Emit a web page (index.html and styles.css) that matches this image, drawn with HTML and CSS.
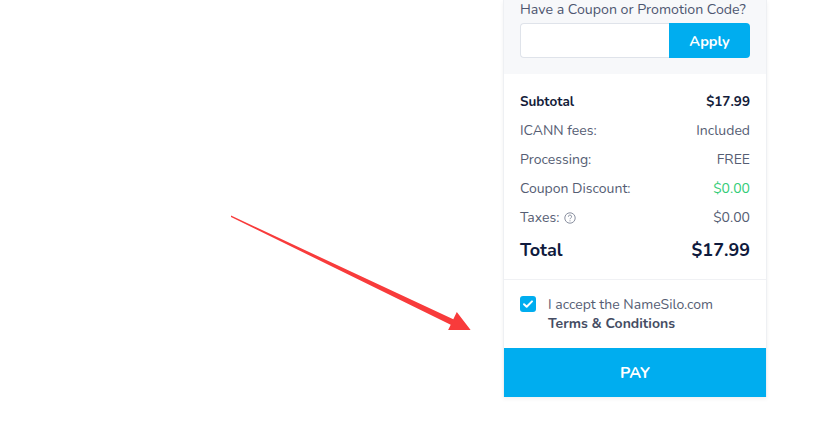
FILE: index.html
```html
<!DOCTYPE html>
<html>
<head>
<meta charset="utf-8">
<link rel="stylesheet" href="styles.css">
</head>
<body>
<div class="page">
  <div class="panel">
    <div class="coupon">
      <div class="coupon-title">Have a Coupon or Promotion Code?</div>
      <div class="coupon-form">
        <input class="coupon-input" type="text">
        <button class="apply-btn">Apply</button>
      </div>
    </div>
    <div class="summary">
      <div class="row strong"><span>Subtotal</span><span>$17.99</span></div>
      <div class="row"><span>ICANN fees:</span><span>Included</span></div>
      <div class="row"><span>Processing:</span><span>FREE</span></div>
      <div class="row"><span>Coupon Discount:</span><span class="green">$0.00</span></div>
      <div class="row"><span class="taxes">Taxes:
        <svg class="help" width="12" height="12" viewBox="0 0 12 12"><circle cx="6" cy="6" r="5.2" fill="none" stroke="#8a90a0" stroke-width="1"/><path d="M4.4 4.7a1.6 1.6 0 1 1 2.3 1.4c-.5.3-.7.5-.7 1.1" fill="none" stroke="#8a90a0" stroke-width="1"/><circle cx="6" cy="8.8" r=".6" fill="#8a90a0"/></svg></span><span>$0.00</span></div>
      <div class="row total"><span>Total</span><span>$17.99</span></div>
    </div>
    <div class="terms">
      <span class="check"><svg width="12" height="10" viewBox="0 0 12 10"><path d="M2 5.2l2.7 2.6L10 2.4" fill="none" stroke="#fff" stroke-width="2" stroke-linecap="round" stroke-linejoin="round"/></svg></span>
      <div class="terms-text">I accept the NameSilo.com<br><b>Terms &amp; Conditions</b></div>
    </div>
    <button class="pay-btn">PAY</button>
  </div>
</div>
<svg class="arrow" width="822" height="422" viewBox="0 0 822 422">
  <defs><clipPath id="c"><rect x="0" y="0" width="822" height="330"/></clipPath></defs>
  <polygon clip-path="url(#c)" fill="#f83b3b" points="231,215.6 231,217 450.7,324.7 447.2,331.9 471.8,331.5 456.8,312.1 453.3,319.3"/>
</svg>
</body>
</html>
```
FILE: styles.css
```css
html, body {
  margin: 0;
  padding: 0;
  background: #fff;
}
body {
  width: 822px;
  height: 422px;
  overflow: hidden;
  position: relative;
  font-family: "Nunito", "Lato", "Open Sans", sans-serif;
}
.page {
  display: flex;
  padding-left: 503px;
}
.panel {
  width: 262px;
  border-left: 1px solid #eef0f3;
  border-right: 1px solid #eef0f3;
  box-shadow: 0 2px 4px rgba(0,0,0,0.06);
  display: flex;
  flex-direction: column;
}
.coupon {
  background: #f7f8fa;
  padding: 0 16px 16px 16px;
}
.coupon-title {
  font-size: 14.2px;
  line-height: 19px;
  color: #4d5670;
  margin-bottom: 4px;
  white-space: nowrap;
}
.coupon-form {
  display: flex;
  height: 35px;
}
.coupon-input {
  flex: 1;
  min-width: 0;
  border: 1px solid #dfe3ea;
  border-right: none;
  border-radius: 4px 0 0 4px;
  background: #fff;
  padding: 0;
  margin: 0;
}
.apply-btn {
  width: 81px;
  border: none;
  background: #00adef;
  color: #fff;
  font-family: inherit;
  font-size: 14.5px;
  font-weight: 700;
  border-radius: 0 4px 4px 0;
  margin: 0;
}
.summary {
  padding: 13px 16px 12px 16px;
  border-bottom: 1px solid #f0f1f4;
  display: flex;
  flex-direction: column;
}
.row {
  display: flex;
  justify-content: space-between;
  align-items: center;
  height: 29px;
  font-size: 14px;
  color: #555d73;
}
.row.strong {
  font-weight: 700;
  color: #141c3a;
  font-size: 13.5px;
}
.row.total {
  height: 35px;
  font-weight: 700;
  color: #0f1a3d;
  font-size: 18px;
}
.green { color: #33cc77; }
.taxes {
  display: flex;
  align-items: center;
  gap: 5px;
}
.terms {
  display: flex;
  align-items: flex-start;
  gap: 12px;
  padding: 15px 16px 15px 16px;
}
.check {
  width: 16px;
  height: 16px;
  border-radius: 3px;
  background: #00adef;
  display: flex;
  align-items: center;
  justify-content: center;
  flex-shrink: 0;
  margin-top: 1px;
}
.terms-text {
  font-size: 14px;
  line-height: 19px;
  color: #555d73;
}
.terms-text b {
  color: #454d63;
}
.pay-btn {
  height: 49px;
  border: none;
  background: #00adef;
  color: #fff;
  font-family: inherit;
  font-size: 16px;
  font-weight: 700;
  margin: 0;
}
.arrow {
  position: absolute;
  left: 0;
  top: 0;
  pointer-events: none;
}
```
